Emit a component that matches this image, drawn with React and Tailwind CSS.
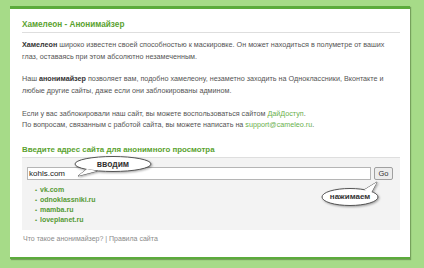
import React from 'react';

const font = { fontFamily: '"Liberation Sans", Arial, sans-serif' };

function Bubble({ left, top, w, h, cx, cy, rx, ry, tail, label, textClass }) {
    return (
        <div className="absolute" style={{ left, top, width: w, height: h }}>
            <svg width={w} height={h} className="absolute inset-0 drop-shadow-[1px_1px_1px_rgba(0,0,0,0.35)]">
                <polygon points={tail} fill="#fff" stroke="#555" strokeWidth="1" strokeLinejoin="round" />
                <ellipse cx={cx} cy={cy} rx={rx} ry={ry} fill="#fff" stroke="#555" strokeWidth="1" />
                <polygon points={tail} fill="#fff" stroke="none" />
            </svg>
            <div
                className={"absolute flex items-center justify-center font-bold text-[#333] " + textClass}
                style={{ left: cx - rx, top: cy - ry, width: rx * 2, height: ry * 2 }}
            >
                {label}
            </div>
        </div>
    );
}

export default function App() {
    const sites = ['vk.com', 'odnoklassniki.ru', 'mamba.ru', 'loveplanet.ru'];

    return (
        <div className="relative w-[424px] h-[268px] overflow-hidden bg-[#a6db88] pt-[6px] pl-[10px]" style={font}>
            <div className="w-[400px] h-[253px] bg-white border-t-[3px] border-b-[2px] border-[#5cab3c] shadow-[1px_1px_1px_rgba(60,90,40,0.45)] pl-[12px] pr-[10px] pt-[9px]">
                {/* header */}
                <h1 className="text-[8.2px] leading-[14px] font-bold text-[#5aa22f] border-b border-[#dedede]">
                    Хамелеон - Анонимайзер
                </h1>

                <div className="text-[7.2px] text-[#555]">
                    <p className="mt-[6px] leading-[12px]">
                        <b className="text-[#333]">Хамелеон</b> широко известен своей способностью к маскировке. Он может находиться в полуметре от ваших<br />
                        глаз, оставаясь при этом абсолютно незамеченным.
                    </p>
                    <p className="mt-[10px] leading-[12px]">
                        Наш <b className="text-[#333]">анонимайзер</b> позволяет вам, подобно хамелеону, незаметно заходить на Одноклассники, Вконтакте и<br />
                        любые другие сайты, даже если они заблокированы админом.
                    </p>
                    <p className="mt-[11px] leading-[11px]">
                        Если у вас заблокировали наш сайт, вы можете воспользоваться сайтом <span className="text-[#6ab04c]">ДайДоступ</span>.<br />
                        По вопросам, связанным с работой сайта, вы можете написать на <span className="text-[#6ab04c]">support@cameleo.ru</span>.
                    </p>
                </div>

                <h2 className="mt-[13px] text-[7.9px] leading-[14px] font-bold text-[#5aa22f] border-b border-[#dedede]">
                    Введите адрес сайта для анонимного просмотра
                </h2>

                {/* form box */}
                <div className="bg-[#f3f3f3] pt-[9px] pb-[5px] pl-[5px] pr-[7px]">
                    <div className="flex items-center gap-[3px]">
                        <div className="w-[344px] h-[13px] bg-white border border-[#b5b5b5] flex items-center pl-[1px] text-[8px] text-[#222]">
                            kohls.com
                        </div>
                        <div className="w-[19px] h-[13px] border border-[#a0a0a0] rounded-[2px] bg-[#ececec] flex items-center justify-center text-[7.5px] text-[#333]">
                            Go
                        </div>
                    </div>
                    <ul className="mt-[5px] pl-[8px]">
                        {sites.map((s) => (
                            <li key={s} className="flex items-center h-[10px] text-[7px] font-semibold text-[#559a35]">
                                <span className="w-[5px] text-[6px] text-[#559a35]">•</span>
                                {s}
                            </li>
                        ))}
                    </ul>
                </div>

                {/* footer */}
                <div className="mt-[4px] pl-px text-[7px] leading-[10px] text-[#8a8a8a]">
                    Что такое анонимайзер? | Правила сайта
                </div>
            </div>

            {/* callouts */}
            <Bubble
                left={73} top={155} w={82} h={24}
                cx={40} cy={9} rx={38} ry={7.5}
                tail="14,14 24,16 5,21"
                label="вводим"
                textClass="text-[8.5px]"
            />
            <Bubble
                left={320} top={179} w={62} h={28}
                cx={30} cy={18} rx={28} ry={8.5}
                tail="44,11 51,14 57,3"
                label="нажимаем"
                textClass="text-[8px]"
            />
        </div>
    );
}
